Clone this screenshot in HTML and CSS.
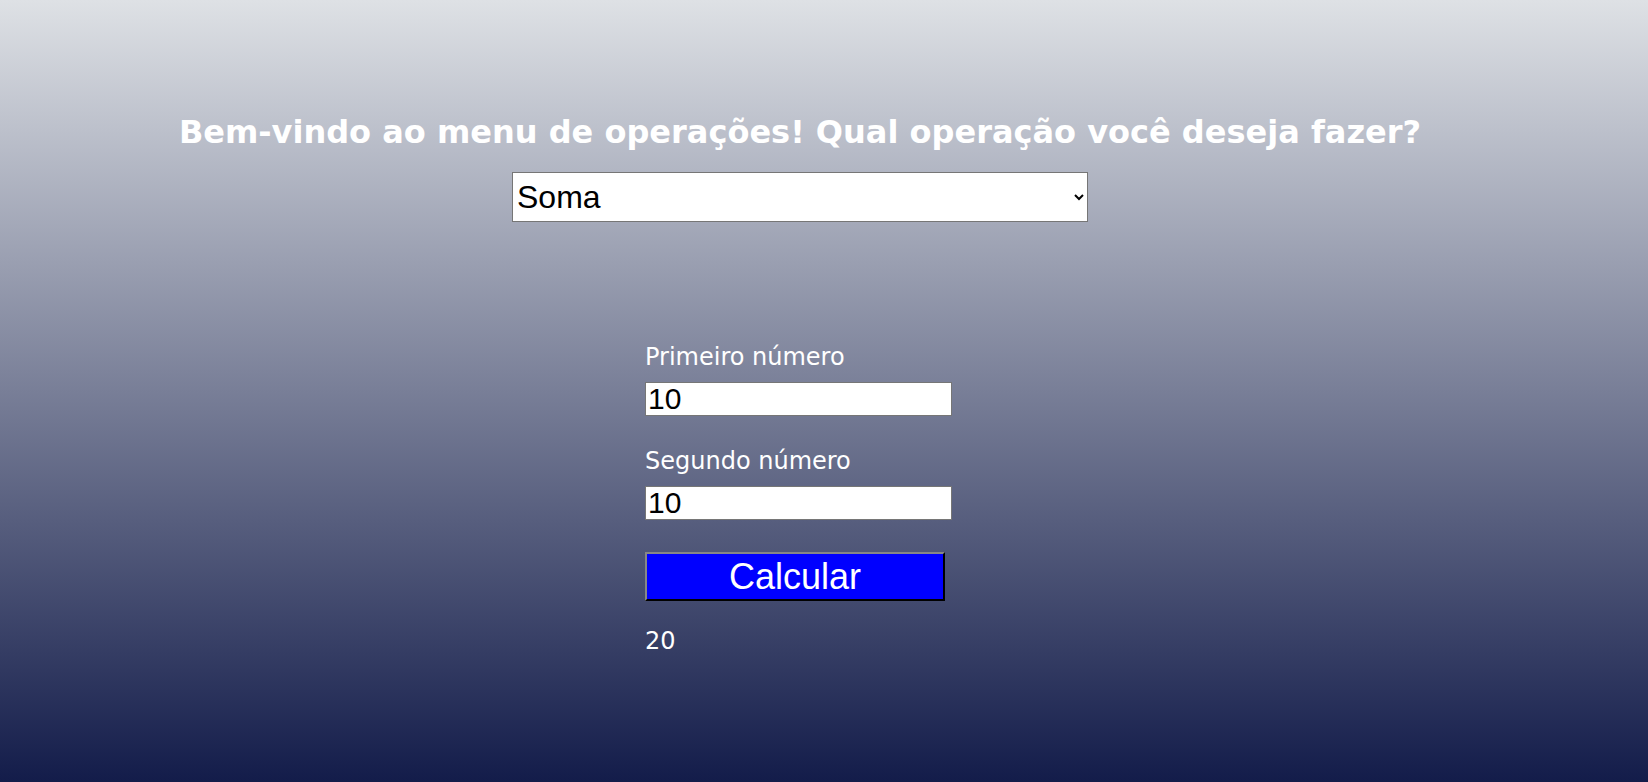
FILE: index.html
```html
<!DOCTYPE html>
<html lang="pt">
<head>
<meta charset="utf-8">
<title>Menu de operações</title>
<link rel="stylesheet" href="styles.css">
</head>
<body>
<main class="page">
  <h1 class="title">Bem-vindo ao menu de operações! Qual operação você deseja fazer?</h1>
  <select class="op-select">
    <option>Soma</option>
    <option>Subtração</option>
    <option>Multiplicação</option>
    <option>Divisão</option>
  </select>
  <form class="calc">
    <label class="field-label" for="n1">Primeiro número</label>
    <input class="num-input" id="n1" type="text" value="10">
    <label class="field-label" for="n2">Segundo número</label>
    <input class="num-input num-input-last" id="n2" type="text" value="10">
    <button class="calc-btn" type="button">Calcular</button>
    <p class="result">20</p>
  </form>
</main>
</body>
</html>
```

FILE: styles.css
```css
html, body {
  margin: 0;
  height: 100%;
}
body {
  background: linear-gradient(to bottom, #dee1e5 0%, #131c4a 100%);
  font-family: "DejaVu Sans", Verdana, sans-serif;
  color: #ffffff;
}
.page {
  width: 1600px;
  display: flex;
  flex-direction: column;
  align-items: center;
  padding-top: 113px;
}
.title {
  margin: 0;
  font-size: 32px;
  font-weight: bold;
  line-height: 38px;
  color: #ffffff;
}
.op-select {
  margin-top: 21px;
  width: 576px;
  height: 50px;
  font-family: "Liberation Sans", Arial, sans-serif;
  font-size: 32px;
  color: #000;
  background: #fff;
  border: 1px solid #767676;
  border-radius: 0;
  padding: 0;
}
.calc {
  margin-top: 120px;
  width: 310px;
  display: flex;
  flex-direction: column;
  align-items: flex-start;
}
.field-label {
  font-size: 24px;
  line-height: 30px;
  margin-bottom: 10px;
}
.num-input {
  width: 307px;
  height: 34px;
  box-sizing: border-box;
  font-family: "Liberation Sans", Arial, sans-serif;
  font-size: 30px;
  padding: 0 2px;
  border: 1px solid #767676;
  color: #000;
  background: #fff;
  margin: 0 0 30px 0;
}
.num-input-last {
  margin-bottom: 32px;
}
.calc-btn {
  width: 300px;
  height: 49px;
  font-family: "Liberation Sans", Arial, sans-serif;
  font-size: 36px;
  line-height: 1;
  color: #fff;
  background: #0000ff;
  border: 2px outset #333;
  border-right-color: #000;
  border-bottom-color: #000;
  padding: 0;
}
.result {
  margin: 25px 0 0 0;
  font-size: 24px;
  line-height: 30px;
}
```
